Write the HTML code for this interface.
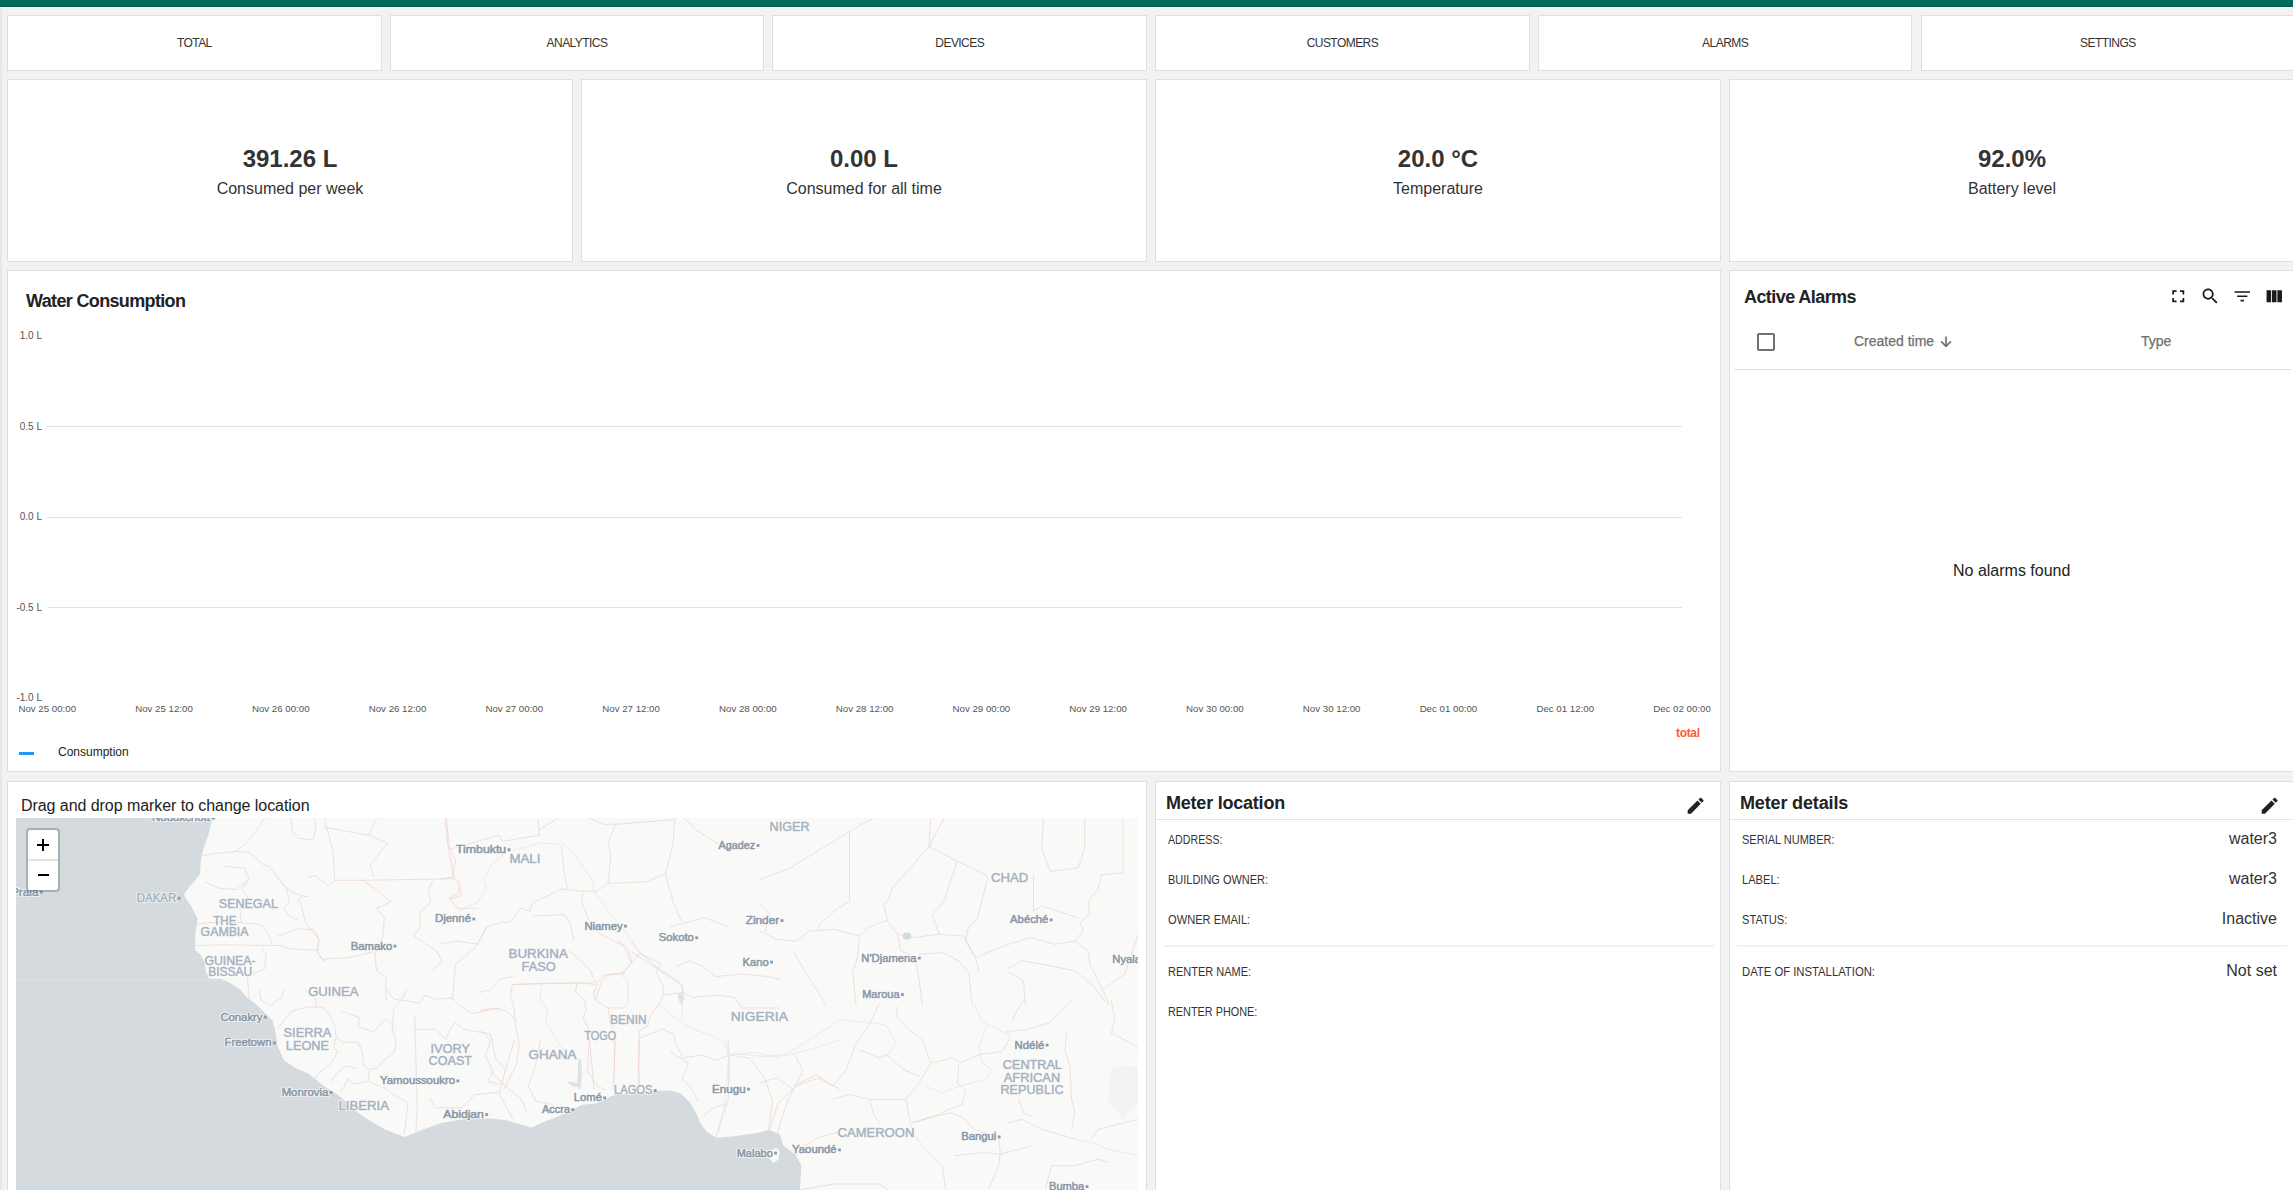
<!DOCTYPE html>
<html><head><meta charset="utf-8">
<style>
*{box-sizing:border-box;margin:0;padding:0}
html,body{width:2293px;height:1190px;overflow:hidden;background:#f2f2f2;font-family:"Liberation Sans",sans-serif;color:#333}
.abs{position:absolute}
#topbar{position:absolute;left:0;top:0;width:2293px;height:7px;background:#006a5c;border-bottom:1px solid #005a4e}
#topline{position:absolute;left:0;top:7px;width:2293px;height:1px;background:#fbf8f8}
#leftstrip{position:absolute;left:0;top:8px;width:2px;height:1182px;background:#e7e7e7}
.card{position:absolute;background:#fff;border:1px solid #dfdfdf}
.tab{top:15px;height:56px;display:flex;align-items:center;justify-content:center;font-size:12px;letter-spacing:-0.55px;color:#333}
.stat{top:79px;height:183px;width:566px}
.stat .v{position:absolute;left:0;right:0;top:64px;text-align:center;font-size:24px;font-weight:bold;line-height:30px;color:#333}
.stat .l{position:absolute;left:0;right:0;top:98.8px;text-align:center;font-size:16px;line-height:20px;color:#333}
.t{position:absolute;white-space:nowrap;line-height:1}
</style></head>
<body>
<div id="topbar"></div><div id="topline"></div><div id="leftstrip"></div>
<div class="card tab" style="left:7.0px;width:374.7px">TOTAL</div>
<div class="card tab" style="left:389.7px;width:374.7px">ANALYTICS</div>
<div class="card tab" style="left:772.4px;width:374.7px">DEVICES</div>
<div class="card tab" style="left:1155.1px;width:374.7px">CUSTOMERS</div>
<div class="card tab" style="left:1537.8px;width:374.7px">ALARMS</div>
<div class="card tab" style="left:1920.5px;width:374.7px">SETTINGS</div>
<div class="card stat" style="left:7px"><div class="v">391.26 L</div><div class="l">Consumed per week</div></div>
<div class="card stat" style="left:581px"><div class="v">0.00 L</div><div class="l">Consumed for all time</div></div>
<div class="card stat" style="left:1155px"><div class="v">20.0 °C</div><div class="l">Temperature</div></div>
<div class="card stat" style="left:1729px"><div class="v">92.0%</div><div class="l">Battery level</div></div>
<div class="card" style="left:7px;top:270px;width:1714px;height:502px"></div>
<div class="card" style="left:1729px;top:270px;width:566px;height:502px"></div>
<div class="card" style="left:7px;top:781px;width:1140px;height:420px"></div>
<div class="card" style="left:1155px;top:781px;width:566px;height:420px"></div>
<div class="card" style="left:1729px;top:781px;width:566px;height:420px"></div>
<div class="t" style="left:26px;top:291.76px;font-size:18px;color:#222;font-weight:bold;letter-spacing:-0.65px">Water Consumption</div>
<div class="t" style="left:0;width:42px;text-align:right;top:331.04px;font-size:10px;color:#555">1.0 L</div>
<div class="t" style="left:0;width:42px;text-align:right;top:421.54px;font-size:10px;color:#555">0.5 L</div>
<div class="t" style="left:0;width:42px;text-align:right;top:512.03px;font-size:10px;color:#555">0.0 L</div>
<div class="t" style="left:0;width:42px;text-align:right;top:602.53px;font-size:10px;color:#555">-0.5 L</div>
<div class="t" style="left:0;width:42px;text-align:right;top:693.03px;font-size:10px;color:#555">-1.0 L</div>
<div class="abs" style="left:47px;top:426px;width:1635px;height:1px;background:#e2e2e2"></div>
<div class="abs" style="left:47px;top:517px;width:1635px;height:1px;background:#e2e2e2"></div>
<div class="abs" style="left:47px;top:607px;width:1635px;height:1px;background:#e2e2e2"></div>
<div class="t" style="left:7.25px;width:80px;text-align:center;top:703.79px;font-size:9.7px;color:#555">Nov 25 00:00</div>
<div class="t" style="left:124.02px;width:80px;text-align:center;top:703.79px;font-size:9.7px;color:#555">Nov 25 12:00</div>
<div class="t" style="left:240.79px;width:80px;text-align:center;top:703.79px;font-size:9.7px;color:#555">Nov 26 00:00</div>
<div class="t" style="left:357.55px;width:80px;text-align:center;top:703.79px;font-size:9.7px;color:#555">Nov 26 12:00</div>
<div class="t" style="left:474.32px;width:80px;text-align:center;top:703.79px;font-size:9.7px;color:#555">Nov 27 00:00</div>
<div class="t" style="left:591.09px;width:80px;text-align:center;top:703.79px;font-size:9.7px;color:#555">Nov 27 12:00</div>
<div class="t" style="left:707.86px;width:80px;text-align:center;top:703.79px;font-size:9.7px;color:#555">Nov 28 00:00</div>
<div class="t" style="left:824.62px;width:80px;text-align:center;top:703.79px;font-size:9.7px;color:#555">Nov 28 12:00</div>
<div class="t" style="left:941.39px;width:80px;text-align:center;top:703.79px;font-size:9.7px;color:#555">Nov 29 00:00</div>
<div class="t" style="left:1058.16px;width:80px;text-align:center;top:703.79px;font-size:9.7px;color:#555">Nov 29 12:00</div>
<div class="t" style="left:1174.93px;width:80px;text-align:center;top:703.79px;font-size:9.7px;color:#555">Nov 30 00:00</div>
<div class="t" style="left:1291.70px;width:80px;text-align:center;top:703.79px;font-size:9.7px;color:#555">Nov 30 12:00</div>
<div class="t" style="left:1408.46px;width:80px;text-align:center;top:703.79px;font-size:9.7px;color:#555">Dec 01 00:00</div>
<div class="t" style="left:1525.23px;width:80px;text-align:center;top:703.79px;font-size:9.7px;color:#555">Dec 01 12:00</div>
<div class="t" style="left:1642.00px;width:80px;text-align:center;top:703.79px;font-size:9.7px;color:#555">Dec 02 00:00</div>
<div class="abs" style="left:19px;top:752px;width:15px;height:3px;background:#2196f3"></div>
<div class="t" style="left:58px;top:745.84px;font-size:12px;color:#222">Consumption</div>
<div class="t" style="left:1676px;top:727.34px;font-size:12px;color:#ff5b2e;font-weight:bold;letter-spacing:-0.34px">total</div>
<div class="t" style="left:1744px;top:287.76px;font-size:18px;color:#222;font-weight:bold;letter-spacing:-0.57px">Active Alarms</div>
<svg class="abs" style="left:2167.9px;top:285.8px" width="20.5" height="20.5" viewBox="0 0 24 24"><path fill="#1a1a1a" d="M7 14H5v5h5v-2H7v-3zm-2-4h2V7h3V5H5v5zm12 7h-3v2h5v-5h-2v3zM14 5v2h3v3h2V5h-5z"/></svg>
<svg class="abs" style="left:2199.8px;top:285.8px" width="20.5" height="20.5" viewBox="0 0 24 24"><path fill="#1a1a1a" d="M15.5 14h-.79l-.28-.27C15.410 12.59 16 11.11 16 9.5 16 5.91 13.09 3 9.5 3S3 5.91 3 9.5 5.91 16 9.5 16c1.61 0 3.09-.59 4.230-1.57l.27.28v.79l5 4.99L20.49 19l-4.99-5zm-6 0C7.01 14 5 11.99 5 9.5S7.01 5 9.5 5 14 7.01 14 9.5 11.99 14 9.5 14z"/></svg>
<svg class="abs" style="left:2231.6px;top:285.8px" width="20.5" height="20.5" viewBox="0 0 24 24"><path fill="#1a1a1a" d="M10 18h4v-2h-4v2zM3 6v2h18V6H3zm3 7h12v-2H6v2z"/></svg>
<svg class="abs" style="left:2263.9px;top:285.8px" width="20.5" height="20.5" viewBox="0 0 24 24"><path fill="#1a1a1a" d="M14.67 5v14H9.33V5h5.34zm1 14H21V5h-5.33v14zm-7.34 0V5H3v14h5.33z"/></svg>
<div class="abs" style="left:1757px;top:333px;width:18px;height:18px;border:2px solid #707070;border-radius:2px"></div>
<div class="t" style="left:1854px;top:334.15px;font-size:14px;color:#707070;-webkit-text-stroke:0.25px #707070">Created time</div>
<svg class="abs" style="left:1938.2px;top:334.2px" width="16" height="16" viewBox="0 0 24 24"><path fill="#6a6a6a" stroke="#6a6a6a" stroke-width="0.6" d="M20 12l-1.41-1.41L13 16.17V4h-2v12.17l-5.58-5.59L4 12l8 8 8-8z"/></svg>
<div class="t" style="left:2141px;top:334.15px;font-size:14px;color:#707070;-webkit-text-stroke:0.25px #707070">Type</div>
<div class="abs" style="left:1734px;top:369px;width:557px;height:1px;background:#e0e0e0"></div>
<div class="t" style="left:1953px;top:563.46px;font-size:16px;color:#222">No alarms found</div>
<div class="t" style="left:1166px;top:794.06px;font-size:18px;color:#222;font-weight:bold;letter-spacing:-0.22px">Meter location</div>
<svg class="abs" style="left:1685.2px;top:794.8px" width="21.3" height="21.3" viewBox="0 0 24 24"><path fill="#222" d="M3 17.25V21h3.75L17.81 9.94l-3.75-3.75L3 17.25zM20.71 7.04c.39-.39.39-1.02 0-1.41l-2.34-2.34c-.39-.39-1.02-.39-1.41 0l-1.83 1.83 3.75 3.75 1.83-1.83z"/></svg>
<div class="abs" style="left:1156px;top:819px;width:564px;height:1px;background:#e4e4e4"></div>
<div class="t" style="left:1168px;top:834.42px;font-size:12.5px;color:#333;transform:scaleX(0.8519);transform-origin:0 0">ADDRESS:</div>
<div class="t" style="left:1168px;top:874.42px;font-size:12.5px;color:#333;transform:scaleX(0.8783);transform-origin:0 0">BUILDING OWNER:</div>
<div class="t" style="left:1168px;top:914.42px;font-size:12.5px;color:#333;transform:scaleX(0.8897);transform-origin:0 0">OWNER EMAIL:</div>
<div class="t" style="left:1168px;top:966.42px;font-size:12.5px;color:#333;transform:scaleX(0.8806);transform-origin:0 0">RENTER NAME:</div>
<div class="t" style="left:1168px;top:1006.42px;font-size:12.5px;color:#333;transform:scaleX(0.8686);transform-origin:0 0">RENTER PHONE:</div>
<div class="abs" style="left:1163px;top:945px;width:551px;height:2px;background:#f1f1f1"></div>
<div class="t" style="left:1740px;top:794.46px;font-size:18px;color:#222;font-weight:bold;letter-spacing:-0.15px">Meter details</div>
<svg class="abs" style="left:2258.6px;top:795px" width="21.3" height="21.3" viewBox="0 0 24 24"><path fill="#222" d="M3 17.25V21h3.75L17.81 9.94l-3.75-3.75L3 17.25zM20.71 7.04c.39-.39.39-1.02 0-1.41l-2.34-2.34c-.39-.39-1.02-.39-1.41 0l-1.83 1.83 3.75 3.75 1.83-1.83z"/></svg>
<div class="abs" style="left:1730px;top:819px;width:563px;height:1px;background:#e4e4e4"></div>
<div class="t" style="left:1742px;top:834.42px;font-size:12.5px;color:#333;transform:scaleX(0.8805);transform-origin:0 0">SERIAL NUMBER:</div>
<div class="t" style="left:2077px;width:200px;text-align:right;top:831.46px;font-size:16px;color:#333">water3</div>
<div class="t" style="left:1742px;top:874.42px;font-size:12.5px;color:#333;transform:scaleX(0.8892);transform-origin:0 0">LABEL:</div>
<div class="t" style="left:2077px;width:200px;text-align:right;top:871.46px;font-size:16px;color:#333">water3</div>
<div class="t" style="left:1742px;top:914.42px;font-size:12.5px;color:#333;transform:scaleX(0.8913);transform-origin:0 0">STATUS:</div>
<div class="t" style="left:2077px;width:200px;text-align:right;top:911.46px;font-size:16px;color:#333">Inactive</div>
<div class="t" style="left:1742px;top:966.42px;font-size:12.5px;color:#333;transform:scaleX(0.9030);transform-origin:0 0">DATE OF INSTALLATION:</div>
<div class="t" style="left:2077px;width:200px;text-align:right;top:963.46px;font-size:16px;color:#333">Not set</div>
<div class="abs" style="left:1737px;top:945px;width:550px;height:2px;background:#f1f1f1"></div>
<div class="t" style="left:21px;top:798.06px;font-size:16px;color:#222;letter-spacing:-0.06px">Drag and drop marker to change location</div>
<svg class="abs" style="left:16px;top:818px" width="1122" height="372" viewBox="16 818 1122 372">
<rect x="16" y="818" width="1122" height="372" fill="#f9f9f8"/>
<g fill="none" stroke="#e3eaee" stroke-width="0.9"><path d="M541.5 984.5 L540.2 998.9 L548.0 1010.7 L545.4 1021.1 L553.3 1034.2 L561.1 1047.3 L571.6 1055.1"/><path d="M659.2 1004.1 L669.7 1013.3 L682.8 1023.7 L695.9 1030.3 L715.5 1036.8 L724.7 1044.7 L728.6 1055.1 L728.6 1089.9"/><path d="M731.2 1055.1 L754.8 1052.5 L779.6 1057.8"/><path d="M631.8 940.0 L639.6 951.8 L657.9 967.5 L681.5 983.2 L682.8 1000.2 L681.5 1018.5"/><path d="M760.0 1056.3 L784.9 1054.7 L809.7 1039.8 L839.5 1019.9 L859.4 1021.5 L886.0 1024.9 L895.9 1043.1 L886.0 1056.3"/><path d="M973.8 1003.3 L982.1 1021.5 L995.3 1028.2 L1008.6 1034.8"/><path d="M987.0 1024.9 L978.8 1046.4 L982.1 1063.0 L992.0 1069.6 L985.4 1079.5 L958.9 1086.2 L942.3 1092.8 L925.7 1086.2"/><path d="M1074.9 1139.2 L1091.5 1142.5 L1108.0 1149.2 L1139.5 1155.8"/><path d="M505.3 852.3 L541.1 843.0 L564.4 844.5 L572.2 850.8 L592.4 880.3 L593.9 891.2 L611.0 914.5 L626.6 933.2 L635.9 948.7 L657.7 968.9 L682.6 986.0"/><path d="M505.3 852.3 L491.3 864.8 L483.5 880.3 L486.6 889.6 L477.3 902.1 L458.7 911.4"/><path d="M725.1 1040.0 L729.7 1055.3 L734.2 1053.7 L764.8 1056.8 L787.7 1055.3 L810.6 1049.2 L839.6 1040.0"/><path d="M728.1 1062.9 L725.1 1101.1 L719.0 1131.6"/></g>
<g id="borders" fill="none" stroke="#eed5d8" stroke-width="0.8" stroke-linejoin="round"><path d="M202.4 855.7 L211.8 853.9 L235.1 851.5 L249.1 852.3 L258.4 860.1 L263.1 864.8 L269.3 866.3 L277.1 877.2 L284.9 886.5 L292.6 892.7 L302.0 895.9 L308.2 896.6"/><path d="M302.0 895.9 L298.8 899.0 L302.0 908.3 L305.1 920.7 L308.2 927.0 L314.4 930.1 L319.1 939.4 L316.7 950.3 L322.2 959.6 L325.3 961.2"/><path d="M308.2 877.2 L316.0 875.6 L328.4 886.5 L334.6 880.3 L362.6 880.3 L454.3 878.8 L448.1 846.1 L445.0 818.1"/><path d="M291.1 818.1 L292.6 832.1 L298.8 838.3 L312.8 839.9 L316.0 827.4 L314.4 818.1"/><path d="M325.3 818.1 L325.3 827.4 L368.8 835.2 L376.6 818.1"/><path d="M368.8 835.2 L387.5 843.0 L370.4 864.8 L373.5 877.2"/><path d="M326.8 827.4 L333.1 852.3 L334.6 878.8"/><path d="M264.6 818.1 L252.2 836.8 L241.3 847.7 L233.5 852.3"/><path d="M197.8 923.8 L213.3 922.3 L236.6 922.3 L255.3 923.8 L263.1 925.4 L270.9 939.4 L270.9 944.1"/><path d="M196.2 945.6 L221.1 944.8 L280.2 945.6 L281.7 947.2"/><path d="M280.2 945.6 L289.5 948.7 L316.0 950.3"/><path d="M261.5 948.7 L266.2 954.9 L264.6 968.9 L247.5 976.7 L249.1 1000.0"/><path d="M362.6 880.3 L376.6 889.6 L390.6 902.1 L376.6 908.3 L384.4 917.6 L382.8 936.3 L375.0 954.9 L376.6 970.5 L385.9 976.7 L385.9 1000.0"/><path d="M432.6 880.3 L427.9 892.7 L431.0 902.1 L420.1 911.4 L420.1 927.0 L413.9 936.3 L437.2 951.8 L441.9 961.2 L432.6 970.5"/><path d="M454.3 878.8 L460.6 886.5 L460.6 895.9 L449.7 899.0 L457.5 908.3 L479.2 908.3"/><path d="M277.1 936.3 L298.8 928.5 L311.3 930.1 L319.1 939.4 L317.5 951.8 L322.2 959.6 L333.1 958.1 L345.5 958.1 L362.6 954.9 L371.9 951.8 L376.6 954.9"/><path d="M224.2 866.3 L244.4 867.9 L249.1 878.8 L241.3 889.6 L249.1 899.0 L239.8 908.3 L241.3 922.3"/><path d="M205.5 881.9 L218.0 888.1 L236.6 889.6 L249.1 878.8"/><path d="M277.1 877.2 L286.4 888.1 L289.5 902.1 L283.3 908.3 L289.5 916.1 L298.8 920.7"/><path d="M277.2 1029.3 L291.6 1010.9 L307.3 1007.0 L323.0 1007.0 L329.5 1014.9 L334.8 1026.6 L336.1 1037.1 L333.5 1046.3"/><path d="M333.5 1046.3 L337.4 1052.8 L330.8 1063.3 L317.8 1073.7 L315.1 1079.0"/><path d="M336.1 1037.1 L342.6 1042.3 L358.3 1042.3 L362.2 1051.5 L363.5 1065.9 L370.1 1069.8 L377.9 1067.2 L383.2 1060.7 L393.6 1052.8 L396.3 1042.3 L392.3 1029.3 L393.6 1009.6 L402.8 997.9 L406.7 990.0"/><path d="M383.2 1086.8 L393.6 1094.7 L408.0 1102.5 L406.7 1115.6 L404.1 1133.9"/><path d="M368.8 1071.1 L368.8 1081.6 L380.6 1086.8"/><path d="M330.8 1081.6 L338.7 1071.1 L346.5 1065.9 L357.0 1068.5"/><path d="M341.3 1092.1 L347.8 1079.0 L354.4 1084.2 L367.5 1081.6"/><path d="M414.6 1014.9 L415.9 1058.0 L417.2 1107.8 L415.9 1131.3"/><path d="M448.6 1031.9 L455.1 1022.7 L464.3 1029.3 L485.2 1033.2 L490.5 1042.3 L485.2 1055.4 L493.1 1071.1 L487.8 1081.6 L499.6 1084.2"/><path d="M341.3 1010.9 L347.8 1013.6 L359.6 1017.5 L358.3 1026.6 L374.0 1031.9 L385.8 1018.8 L396.3 1029.3"/><path d="M387.1 990.0 L393.6 999.2 L404.1 1000.5 L419.8 1003.1 L425.0 995.2 L435.5 999.2 L452.5 997.9 L461.7 1007.0 L472.1 1013.6 L485.2 1010.9 L499.6 1008.3"/><path d="M414.6 1029.3 L435.5 1029.3 L446.0 1039.7 L448.6 1031.9"/><path d="M429.0 1097.3 L435.5 1107.8 L461.7 1107.8 L474.8 1094.7 L499.6 1092.1"/><path d="M258.9 990.0 L261.5 1000.5 L270.7 1005.7 L281.1 997.9 L283.7 990.0"/><path d="M304.7 990.0 L315.1 997.9 L316.4 1007.0"/><path d="M512.7 984.5 L545.4 983.2 L588.6 983.2 L597.8 981.9"/><path d="M597.8 981.9 L604.3 975.3 L621.3 974.0 L631.8 962.2 L627.8 947.9 L617.4 940.0"/><path d="M621.3 974.0 L627.8 981.9 L627.8 1002.8 L623.9 1008.0 L608.2 1008.0 L595.1 1000.2 L593.8 992.3 L597.8 983.2"/><path d="M631.8 962.2 L639.6 953.1 L660.6 963.6 L656.6 972.7 L663.2 985.8 L663.2 995.0 L659.2 1004.1 L650.1 1015.9 L647.5 1026.4 L639.6 1030.3 L638.3 1051.2 L639.6 1089.9"/><path d="M608.2 1008.0 L609.5 1022.4 L613.5 1030.3 L614.8 1051.2 L613.5 1089.9"/><path d="M576.8 983.2 L575.5 992.3 L584.7 1000.2 L586.0 1010.7 L583.4 1018.5 L588.6 1029.0 L589.9 1044.7 L592.5 1070.8 L593.8 1089.9"/><path d="M512.7 984.5 L510.1 995.0 L514.0 1008.0 L515.3 1025.0 L519.3 1044.7 L516.6 1064.3 L503.6 1089.9"/><path d="M480.0 1010.7 L493.1 1008.0 L506.2 1010.7 L516.6 1021.1"/><path d="M663.2 995.0 L684.1 992.3 L692.0 997.6 L715.5 995.0 L735.1 997.6 L741.7 1008.0 L779.6 1008.0"/><path d="M676.3 966.2 L689.3 960.9 L702.4 966.2 L715.5 976.6 L741.7 974.0 L767.8 976.6 L779.6 979.3"/><path d="M639.6 1038.1 L663.2 1029.0 L673.6 1034.2 L676.3 1044.7 L682.8 1057.8 L702.4 1055.1 L715.5 1060.4 L728.6 1055.1"/><path d="M480.0 992.3 L490.5 989.7 L499.6 979.3 L512.7 976.6"/><path d="M480.0 1031.6 L490.5 1034.2 L495.7 1057.8 L506.2 1070.8"/><path d="M872.7 818.3 L849.5 831.6 L789.8 868.0 L760.0 879.6"/><path d="M849.5 831.6 L849.5 901.2 L836.2 909.5 L819.7 924.4 L818.0 929.4"/><path d="M930.7 818.3 L929.0 846.5 L892.6 887.9 L887.6 901.2 L883.5 903.7 L887.6 921.1 L897.6 934.3 L900.9 950.9 L909.2 954.2 L915.8 960.8 L919.1 980.7 L922.4 1004.9"/><path d="M929.0 846.5 L957.2 861.4 L985.4 874.7 L988.7 879.6"/><path d="M944.0 818.3 L929.0 846.5"/><path d="M957.2 861.4 L944.0 901.2 L932.4 914.4 L939.0 934.3"/><path d="M987.0 881.3 L977.1 919.4 L968.8 926.0 L965.5 941.0 L975.4 957.5 L978.8 970.8"/><path d="M1043.4 818.3 L1041.7 848.1 L1050.0 871.3 L1078.2 868.0 L1084.8 848.1 L1084.8 818.3"/><path d="M1122.9 818.3 L1122.9 873.0 L1101.4 874.7 L1098.1 889.6 L1088.1 901.2 L1089.8 914.4 L1079.9 922.7 L1083.2 931.0 L1074.9 941.0 L1088.1 950.9 L1089.8 964.2 L1098.1 980.7 L1109.7 1004.9"/><path d="M1033.5 874.7 L1033.5 911.1 L1041.7 906.2 L1058.3 911.1 L1078.2 917.8"/><path d="M760.0 931.0 L776.6 939.3 L796.5 941.0 L809.7 931.0 L834.6 929.4 L859.4 936.0 L867.7 927.7 L884.3 921.1 L887.6 921.1"/><path d="M859.4 936.0 L857.8 955.9 L852.8 972.4 L856.1 1004.9"/><path d="M897.6 934.3 L912.5 937.6 L939.0 934.3 L963.8 936.0 L975.4 957.5"/><path d="M975.4 957.5 L1008.6 944.3 L1030.1 937.6 L1055.0 944.3 L1074.9 941.0"/><path d="M919.1 954.2 L942.3 952.6 L958.9 960.8 L968.8 972.4 L972.1 1004.9"/><path d="M1006.9 969.1 L1021.8 960.8 L1041.7 964.2 L1074.9 970.8 L1091.5 984.0 L1108.0 1004.9"/><path d="M1025.2 1004.9 L1023.5 980.7 L1008.6 972.4"/><path d="M1101.4 990.7 L1124.6 974.1 L1139.5 931.0"/><path d="M760.0 904.5 L769.9 914.4 L765.0 931.0"/><path d="M793.1 950.9 L809.7 979.1 L826.3 1004.9"/><path d="M879.3 1003.3 L869.4 1024.9 L856.1 1043.1 L846.2 1069.6 L832.9 1086.2 L816.3 1074.6 L799.8 1082.9 L778.2 1102.8 L769.9 1129.3"/><path d="M897.6 1006.6 L895.9 1016.6 L909.2 1029.8 L922.4 1039.8 L930.7 1063.0 L919.1 1082.9 L905.8 1099.4 L909.2 1116.0 L912.5 1132.6 L922.4 1145.8 L942.3 1165.7 L945.6 1189.9"/><path d="M930.7 1063.0 L952.2 1058.0 L960.5 1063.0 L978.8 1054.7 L1002.0 1051.4 L1010.2 1038.1 L1006.9 1031.5 L1025.2 1029.8 L1048.4 1023.2 L1071.6 1000.0"/><path d="M958.9 1064.6 L957.2 1082.9 L965.5 1089.5 L962.2 1104.4 L952.2 1107.7 L935.7 1116.0 L912.5 1122.6"/><path d="M998.6 1135.9 L1000.3 1152.5 L998.6 1165.7 L988.7 1189.9"/><path d="M912.5 1122.6 L935.7 1116.0 L952.2 1112.7 L965.5 1119.3 L973.8 1129.3 L995.3 1135.9"/><path d="M799.8 1189.9 L834.6 1184.0 L879.3 1184.0 L887.6 1189.9"/><path d="M953.9 1155.8 L983.7 1152.5 L1000.3 1154.1 L1031.8 1145.8"/><path d="M1011.9 1019.9 L1023.5 1000.0"/><path d="M1111.3 1000.0 L1114.7 1019.9 L1111.3 1033.1 L1131.2 1043.1 L1139.5 1049.7"/><path d="M1066.6 1033.1 L1064.9 1049.7 L1069.9 1066.3 L1071.6 1099.4 L1074.9 1112.7 L1071.6 1129.3"/><path d="M1018.5 1097.8 L1023.5 1112.7 L1031.8 1116.0"/><path d="M1045.1 1189.9 L1051.7 1165.7 L1074.9 1165.7 L1098.1 1159.1 L1108.0 1162.4"/><path d="M1139.5 1119.3 L1124.6 1122.6 L1098.1 1129.3 L1091.5 1139.2"/><path d="M760.0 1082.9 L776.6 1077.9 L793.1 1089.5"/><path d="M859.4 1049.7 L879.3 1058.0 L886.0 1054.7 L904.2 1069.6 L919.1 1076.2"/><path d="M832.9 1099.4 L849.5 1094.5 L869.4 1099.4 L905.8 1099.4"/><path d="M869.4 1099.4 L874.4 1116.0 L879.3 1122.6"/><path d="M1008.6 1122.6 L1021.8 1119.3 L1041.7 1129.3 L1074.9 1139.2"/><path d="M446.2 818.1 L449.3 847.7 L455.5 860.1 L452.4 877.2 L440.0 878.8"/><path d="M449.3 849.2 L499.1 835.2 L502.2 841.4 L539.5 835.2 L538.0 818.1"/><path d="M538.0 830.5 L558.2 818.1"/><path d="M589.3 818.1 L603.3 824.3 L615.7 824.3 L673.2 819.7"/><path d="M615.7 824.3 L607.9 843.0 L611.0 855.4 L607.9 883.4 L645.3 881.9 L657.7 877.2 L665.5 874.1 L673.2 843.0 L674.8 818.1"/><path d="M561.3 846.1 L564.4 874.1 L567.5 889.6 L583.1 891.2 L597.1 891.2 L607.9 883.4"/><path d="M440.0 944.1 L455.5 941.0 L477.3 944.1 L486.6 927.0 L502.2 922.3 L510.0 922.3 L520.9 908.3 L530.2 911.4 L531.7 903.6 L561.3 888.9 L567.5 889.6"/><path d="M583.1 891.2 L581.5 902.1 L589.3 920.7 L598.6 933.2 L623.5 945.6 L631.3 962.7 L623.5 973.6 L609.5 973.6 L601.7 981.4 L595.5 1000.0"/><path d="M631.3 951.8 L657.7 968.9 L682.6 986.0 L684.1 1000.0"/><path d="M670.1 927.0 L704.3 917.6 L729.2 927.0"/><path d="M665.5 874.1 L673.2 902.1 L681.0 920.7"/><path d="M684.1 818.1 L696.6 830.5 L729.2 850.8"/><path d="M513.1 984.5 L579.9 982.9 L595.5 984.5"/><path d="M533.3 916.1 L564.4 914.5 L570.6 923.8 L573.7 939.4"/><path d="M447.8 899.0 L458.7 892.7 L458.7 880.3"/><path d="M486.6 927.0 L475.8 947.2 L455.5 964.3 L452.4 1000.0"/><path d="M569.1 950.3 L589.3 968.9 L595.5 981.4"/><path d="M490.0 1070.5 L505.3 1085.8 L520.5 1098.0 L526.6 1111.7"/><path d="M514.4 1040.0 L505.3 1070.5 L499.2 1093.4 L512.9 1119.4"/><path d="M540.4 1040.0 L535.8 1064.4 L528.2 1085.8 L535.8 1101.1 L551.1 1104.1 L561.7 1113.3"/><path d="M589.2 1040.0 L587.7 1070.5 L596.9 1085.8 L606.0 1090.4"/><path d="M615.2 1040.0 L613.6 1082.7"/><path d="M639.6 1040.0 L638.1 1085.8"/><path d="M670.1 1052.2 L688.4 1062.9 L682.3 1078.2 L693.0 1090.4 L697.6 1101.1"/><path d="M728.1 1040.0 L729.7 1062.9 L728.1 1101.1 L719.0 1125.5 L715.9 1137.7"/><path d="M731.2 1055.3 L749.5 1058.3 L764.8 1078.2 L772.4 1101.1 L769.3 1125.5 L767.8 1131.6"/><path d="M795.3 1055.3 L802.9 1070.5 L787.7 1101.1 L780.0 1124.0 L777.0 1134.6"/><path d="M795.3 1085.8 L818.2 1078.2 L833.5 1085.8 L839.6 1088.8"/><path d="M839.6 1131.6 L818.2 1137.7 L802.9 1146.9 L795.3 1156.0"/><path d="M703.7 1116.3 L711.3 1108.7 L726.6 1104.1"/></g>
<path d="M1111 1068 L1124 1066 L1139 1067 L1139 1100 L1123 1119 L1108 1100 Z" fill="#f3f4f2"/>
<path d="M15.0 817.0 L212.5 818.0 L208.3 835.2 L203.3 848.7 L200.8 860.4 L200.0 873.9 L195.3 880.0 L189.4 887.0 L184.1 894.1 L185.9 898.8 L190.6 904.7 L194.1 911.8 L197.6 918.8 L196.5 927.0 L195.3 933.0 L195.3 944.7 L195.3 950.6 L200.0 954.1 L204.7 962.4 L205.9 971.8 L209.4 978.8 L221.2 978.8 L230.6 983.5 L240.0 989.4 L247.0 997.6 L256.5 1004.7 L265.9 1014.1 L272.3 1020.3 L275.6 1032.0 L277.3 1045.5 L284.0 1060.6 L294.1 1067.3 L309.2 1074.0 L321.0 1084.1 L339.5 1095.9 L358.0 1112.7 L368.0 1119.4 L384.9 1129.5 L405.0 1137.0 L418.5 1131.2 L442.0 1122.8 L462.2 1119.4 L490.0 1118.6 L505.3 1120.1 L526.6 1126.2 L531.2 1127.8 L540.4 1123.2 L554.1 1117.9 L569.4 1111.7 L581.6 1104.9 L596.9 1103.3 L612.1 1095.7 L627.4 1093.4 L654.9 1091.1 L670.1 1090.4 L680.8 1093.4 L690.0 1102.6 L696.1 1113.3 L700.7 1124.0 L706.8 1131.6 L715.9 1137.7 L734.2 1136.2 L757.1 1133.1 L769.3 1130.1 L780.0 1134.6 L783.1 1145.3 L795.3 1154.5 L801.4 1165.2 L799.9 1191.0 L15.0 1191.0 Z" fill="#d4dadd"/>
<ellipse cx="907" cy="936" rx="4.2" ry="3.8" fill="#d4dadd"/><path d="M579 1058 L581 1060 L582 1072 L581 1086 L580 1091 L578 1087 L572 1086 L566 1081 L571 1082 L577 1083 L578 1072 L578 1064 Z" fill="#dde2e5"/><path d="M678 994 L681 993 L683 1000 L681 1005 L679 1001 Z" fill="#dde2e5"/>
<path d="M771 1150 L777 1148 L780 1152 L778 1160 L773 1163 L769 1158 Z" fill="#f9f9f8"/>
<rect x="16" y="980" width="208" height="1" fill="#dde2e4"/>
<g font-family="Liberation Sans" fill="none" stroke="#fff" stroke-width="2.2" stroke-linejoin="round" opacity="0.85"><text x="218.8" y="907.9" font-size="12.5" textLength="59.1" lengthAdjust="spacingAndGlyphs">SENEGAL</text><text x="213.3" y="924.5" font-size="12.5" textLength="23.0" lengthAdjust="spacingAndGlyphs">THE</text><text x="200.6" y="936.3" font-size="12.5" textLength="47.9" lengthAdjust="spacingAndGlyphs">GAMBIA</text><text x="204.4" y="964.5" font-size="12.5" textLength="51.1" lengthAdjust="spacingAndGlyphs">GUINEA-</text><text x="208.2" y="975.5" font-size="12.5" textLength="44.1" lengthAdjust="spacingAndGlyphs">BISSAU</text><text x="308.2" y="995.7" font-size="12.5" textLength="50.2" lengthAdjust="spacingAndGlyphs">GUINEA</text><text x="283.6" y="1037.2" font-size="12.5" textLength="47.6" lengthAdjust="spacingAndGlyphs">SIERRA</text><text x="285.8" y="1049.7" font-size="12.5" textLength="43.2" lengthAdjust="spacingAndGlyphs">LEONE</text><text x="338.5" y="1109.7" font-size="12.5" textLength="50.5" lengthAdjust="spacingAndGlyphs">LIBERIA</text><text x="509.4" y="863.2" font-size="12.5" textLength="31.0" lengthAdjust="spacingAndGlyphs">MALI</text><text x="508.5" y="958.0" font-size="12.5" textLength="59.4" lengthAdjust="spacingAndGlyphs">BURKINA</text><text x="521.6" y="970.8" font-size="12.5" textLength="34.1" lengthAdjust="spacingAndGlyphs">FASO</text><text x="430.5" y="1052.9" font-size="12.5" textLength="39.6" lengthAdjust="spacingAndGlyphs">IVORY</text><text x="428.6" y="1065.0" font-size="12.5" textLength="43.4" lengthAdjust="spacingAndGlyphs">COAST</text><text x="528.6" y="1058.5" font-size="12.5" textLength="47.9" lengthAdjust="spacingAndGlyphs">GHANA</text><text x="769.6" y="831.2" font-size="12.5" textLength="39.9" lengthAdjust="spacingAndGlyphs">NIGER</text><text x="991" y="882.3" font-size="12.5" textLength="37.3" lengthAdjust="spacingAndGlyphs">CHAD</text><text x="610" y="1023.5" font-size="12.5" textLength="36.7" lengthAdjust="spacingAndGlyphs">BENIN</text><text x="730.8" y="1021.2" font-size="12.5" textLength="57.1" lengthAdjust="spacingAndGlyphs">NIGERIA</text><text x="584.4" y="1040.1" font-size="12.5" textLength="31.9" lengthAdjust="spacingAndGlyphs">TOGO</text><text x="1002.8" y="1068.8" font-size="12.5" textLength="59.1" lengthAdjust="spacingAndGlyphs">CENTRAL</text><text x="1003.7" y="1081.6" font-size="12.5" textLength="56.6" lengthAdjust="spacingAndGlyphs">AFRICAN</text><text x="1000.5" y="1094.4" font-size="12.5" textLength="63.0" lengthAdjust="spacingAndGlyphs">REPUBLIC</text><text x="837.6" y="1136.9" font-size="12.5" textLength="76.7" lengthAdjust="spacingAndGlyphs">CAMEROON</text><text x="136.7" y="902.1" font-size="12" textLength="39.6" lengthAdjust="spacingAndGlyphs">DAKAR</text><text x="614" y="1094.4" font-size="12" textLength="38.4" lengthAdjust="spacingAndGlyphs">LAGOS</text><text x="152" y="820.5" font-size="10.5" textLength="58.0" lengthAdjust="spacingAndGlyphs">Nouakchott</text><text x="11" y="895.5" font-size="10.5" textLength="27.5" lengthAdjust="spacingAndGlyphs">Praia</text><text x="220.4" y="1020.5" font-size="10.5" textLength="42.1" lengthAdjust="spacingAndGlyphs">Conakry</text><text x="224.5" y="1046.3" font-size="10.5" textLength="47.0" lengthAdjust="spacingAndGlyphs">Freetown</text><text x="281.7" y="1095.8" font-size="10.5" textLength="46.6" lengthAdjust="spacingAndGlyphs">Monrovia</text><text x="456" y="853.1" font-size="10.5" textLength="50.2" lengthAdjust="spacingAndGlyphs">Timbuktu</text><text x="435" y="922.4" font-size="10.5" textLength="36.0" lengthAdjust="spacingAndGlyphs">Djenné</text><text x="350.7" y="949.5" font-size="10.5" textLength="41.5" lengthAdjust="spacingAndGlyphs">Bamako</text><text x="380" y="1084.3" font-size="10.5" textLength="75.1" lengthAdjust="spacingAndGlyphs">Yamoussoukro</text><text x="443.3" y="1118" font-size="10.5" textLength="40.6" lengthAdjust="spacingAndGlyphs">Abidjan</text><text x="542" y="1113" font-size="10.5" textLength="28.0" lengthAdjust="spacingAndGlyphs">Accra</text><text x="718.5" y="848.9" font-size="10.5" textLength="36.7" lengthAdjust="spacingAndGlyphs">Agadez</text><text x="584.4" y="929.5" font-size="10.5" textLength="38.3" lengthAdjust="spacingAndGlyphs">Niamey</text><text x="658.8" y="941.2" font-size="10.5" textLength="35.1" lengthAdjust="spacingAndGlyphs">Sokoto</text><text x="745.7" y="924" font-size="10.5" textLength="33.5" lengthAdjust="spacingAndGlyphs">Zinder</text><text x="1010.1" y="923.3" font-size="10.5" textLength="38.3" lengthAdjust="spacingAndGlyphs">Abéché</text><text x="742.5" y="965.5" font-size="10.5" textLength="26.2" lengthAdjust="spacingAndGlyphs">Kano</text><text x="861.3" y="961.5" font-size="10.5" textLength="55.2" lengthAdjust="spacingAndGlyphs">N'Djamena</text><text x="1112.3" y="963" font-size="10.5" textLength="28.7" lengthAdjust="spacingAndGlyphs">Nyala</text><text x="862.2" y="998" font-size="10.5" textLength="37.4" lengthAdjust="spacingAndGlyphs">Maroua</text><text x="1014.6" y="1048.5" font-size="10.5" textLength="29.7" lengthAdjust="spacingAndGlyphs">Ndélé</text><text x="573.8" y="1101.2" font-size="10.5" textLength="28.1" lengthAdjust="spacingAndGlyphs">Lomé</text><text x="712.1" y="1092.5" font-size="10.5" textLength="33.6" lengthAdjust="spacingAndGlyphs">Enugu</text><text x="961.2" y="1140.3" font-size="10.5" textLength="35.2" lengthAdjust="spacingAndGlyphs">Bangui</text><text x="736.7" y="1156.5" font-size="10.5" textLength="36.1" lengthAdjust="spacingAndGlyphs">Malabo</text><text x="792" y="1153.3" font-size="10.5" textLength="44.7" lengthAdjust="spacingAndGlyphs">Yaoundé</text><text x="1049" y="1190" font-size="10.5" textLength="35.2" lengthAdjust="spacingAndGlyphs">Bumba</text></g>
<g font-family="Liberation Sans" fill="#a6b2be" stroke="#a6b2be" stroke-width="0.5"><text x="218.8" y="907.9" font-size="12.5" textLength="59.1" lengthAdjust="spacingAndGlyphs">SENEGAL</text><text x="213.3" y="924.5" font-size="12.5" textLength="23.0" lengthAdjust="spacingAndGlyphs">THE</text><text x="200.6" y="936.3" font-size="12.5" textLength="47.9" lengthAdjust="spacingAndGlyphs">GAMBIA</text><text x="204.4" y="964.5" font-size="12.5" textLength="51.1" lengthAdjust="spacingAndGlyphs">GUINEA-</text><text x="208.2" y="975.5" font-size="12.5" textLength="44.1" lengthAdjust="spacingAndGlyphs">BISSAU</text><text x="308.2" y="995.7" font-size="12.5" textLength="50.2" lengthAdjust="spacingAndGlyphs">GUINEA</text><text x="283.6" y="1037.2" font-size="12.5" textLength="47.6" lengthAdjust="spacingAndGlyphs">SIERRA</text><text x="285.8" y="1049.7" font-size="12.5" textLength="43.2" lengthAdjust="spacingAndGlyphs">LEONE</text><text x="338.5" y="1109.7" font-size="12.5" textLength="50.5" lengthAdjust="spacingAndGlyphs">LIBERIA</text><text x="509.4" y="863.2" font-size="12.5" textLength="31.0" lengthAdjust="spacingAndGlyphs">MALI</text><text x="508.5" y="958.0" font-size="12.5" textLength="59.4" lengthAdjust="spacingAndGlyphs">BURKINA</text><text x="521.6" y="970.8" font-size="12.5" textLength="34.1" lengthAdjust="spacingAndGlyphs">FASO</text><text x="430.5" y="1052.9" font-size="12.5" textLength="39.6" lengthAdjust="spacingAndGlyphs">IVORY</text><text x="428.6" y="1065.0" font-size="12.5" textLength="43.4" lengthAdjust="spacingAndGlyphs">COAST</text><text x="528.6" y="1058.5" font-size="12.5" textLength="47.9" lengthAdjust="spacingAndGlyphs">GHANA</text><text x="769.6" y="831.2" font-size="12.5" textLength="39.9" lengthAdjust="spacingAndGlyphs">NIGER</text><text x="991" y="882.3" font-size="12.5" textLength="37.3" lengthAdjust="spacingAndGlyphs">CHAD</text><text x="610" y="1023.5" font-size="12.5" textLength="36.7" lengthAdjust="spacingAndGlyphs">BENIN</text><text x="730.8" y="1021.2" font-size="12.5" textLength="57.1" lengthAdjust="spacingAndGlyphs">NIGERIA</text><text x="584.4" y="1040.1" font-size="12.5" textLength="31.9" lengthAdjust="spacingAndGlyphs">TOGO</text><text x="1002.8" y="1068.8" font-size="12.5" textLength="59.1" lengthAdjust="spacingAndGlyphs">CENTRAL</text><text x="1003.7" y="1081.6" font-size="12.5" textLength="56.6" lengthAdjust="spacingAndGlyphs">AFRICAN</text><text x="1000.5" y="1094.4" font-size="12.5" textLength="63.0" lengthAdjust="spacingAndGlyphs">REPUBLIC</text><text x="837.6" y="1136.9" font-size="12.5" textLength="76.7" lengthAdjust="spacingAndGlyphs">CAMEROON</text><text x="136.7" y="902.1" font-size="12" textLength="39.6" lengthAdjust="spacingAndGlyphs">DAKAR</text><text x="614" y="1094.4" font-size="12" textLength="38.4" lengthAdjust="spacingAndGlyphs">LAGOS</text></g>
<g font-family="Liberation Sans" fill="#8c99a7" stroke="#8c99a7" stroke-width="0.55"><text x="152" y="820.5" font-size="10.5" textLength="58.0" lengthAdjust="spacingAndGlyphs">Nouakchott</text><text x="11" y="895.5" font-size="10.5" textLength="27.5" lengthAdjust="spacingAndGlyphs">Praia</text><text x="220.4" y="1020.5" font-size="10.5" textLength="42.1" lengthAdjust="spacingAndGlyphs">Conakry</text><text x="224.5" y="1046.3" font-size="10.5" textLength="47.0" lengthAdjust="spacingAndGlyphs">Freetown</text><text x="281.7" y="1095.8" font-size="10.5" textLength="46.6" lengthAdjust="spacingAndGlyphs">Monrovia</text><text x="456" y="853.1" font-size="10.5" textLength="50.2" lengthAdjust="spacingAndGlyphs">Timbuktu</text><text x="435" y="922.4" font-size="10.5" textLength="36.0" lengthAdjust="spacingAndGlyphs">Djenné</text><text x="350.7" y="949.5" font-size="10.5" textLength="41.5" lengthAdjust="spacingAndGlyphs">Bamako</text><text x="380" y="1084.3" font-size="10.5" textLength="75.1" lengthAdjust="spacingAndGlyphs">Yamoussoukro</text><text x="443.3" y="1118" font-size="10.5" textLength="40.6" lengthAdjust="spacingAndGlyphs">Abidjan</text><text x="542" y="1113" font-size="10.5" textLength="28.0" lengthAdjust="spacingAndGlyphs">Accra</text><text x="718.5" y="848.9" font-size="10.5" textLength="36.7" lengthAdjust="spacingAndGlyphs">Agadez</text><text x="584.4" y="929.5" font-size="10.5" textLength="38.3" lengthAdjust="spacingAndGlyphs">Niamey</text><text x="658.8" y="941.2" font-size="10.5" textLength="35.1" lengthAdjust="spacingAndGlyphs">Sokoto</text><text x="745.7" y="924" font-size="10.5" textLength="33.5" lengthAdjust="spacingAndGlyphs">Zinder</text><text x="1010.1" y="923.3" font-size="10.5" textLength="38.3" lengthAdjust="spacingAndGlyphs">Abéché</text><text x="742.5" y="965.5" font-size="10.5" textLength="26.2" lengthAdjust="spacingAndGlyphs">Kano</text><text x="861.3" y="961.5" font-size="10.5" textLength="55.2" lengthAdjust="spacingAndGlyphs">N'Djamena</text><text x="1112.3" y="963" font-size="10.5" textLength="28.7" lengthAdjust="spacingAndGlyphs">Nyala</text><text x="862.2" y="998" font-size="10.5" textLength="37.4" lengthAdjust="spacingAndGlyphs">Maroua</text><text x="1014.6" y="1048.5" font-size="10.5" textLength="29.7" lengthAdjust="spacingAndGlyphs">Ndélé</text><text x="573.8" y="1101.2" font-size="10.5" textLength="28.1" lengthAdjust="spacingAndGlyphs">Lomé</text><text x="712.1" y="1092.5" font-size="10.5" textLength="33.6" lengthAdjust="spacingAndGlyphs">Enugu</text><text x="961.2" y="1140.3" font-size="10.5" textLength="35.2" lengthAdjust="spacingAndGlyphs">Bangui</text><text x="736.7" y="1156.5" font-size="10.5" textLength="36.1" lengthAdjust="spacingAndGlyphs">Malabo</text><text x="792" y="1153.3" font-size="10.5" textLength="44.7" lengthAdjust="spacingAndGlyphs">Yaoundé</text><text x="1049" y="1190" font-size="10.5" textLength="35.2" lengthAdjust="spacingAndGlyphs">Bumba</text></g>
<g fill="#8c99a7">
<rect x="212.0" y="816.5" width="3" height="3"/>
<rect x="39.9" y="890.7" width="2.8" height="2.8"/>
<rect x="263.9" y="1015.7" width="2.8" height="2.8"/>
<rect x="272.9" y="1041.5" width="2.8" height="2.8"/>
<rect x="329.7" y="1091.0" width="2.8" height="2.8"/>
<rect x="507.6" y="848.3" width="2.8" height="2.8"/>
<rect x="472.4" y="917.6" width="2.8" height="2.8"/>
<rect x="393.6" y="944.7" width="2.8" height="2.8"/>
<rect x="456.5" y="1079.5" width="2.8" height="2.8"/>
<rect x="485.3" y="1113.2" width="2.8" height="2.8"/>
<rect x="571.4" y="1108.2" width="2.8" height="2.8"/>
<rect x="756.6" y="844.1" width="2.8" height="2.8"/>
<rect x="624.1" y="924.7" width="2.8" height="2.8"/>
<rect x="695.3" y="936.4" width="2.8" height="2.8"/>
<rect x="780.6" y="919.2" width="2.8" height="2.8"/>
<rect x="1049.8" y="918.5" width="2.8" height="2.8"/>
<rect x="770.1" y="960.7" width="2.8" height="2.8"/>
<rect x="917.9" y="956.7" width="2.8" height="2.8"/>
<rect x="1142.4" y="958.2" width="2.8" height="2.8"/>
<rect x="901.0" y="993.2" width="2.8" height="2.8"/>
<rect x="1045.7" y="1043.7" width="2.8" height="2.8"/>
<rect x="603.3" y="1096.4" width="2.8" height="2.8"/>
<rect x="747.1" y="1087.7" width="2.8" height="2.8"/>
<rect x="997.8" y="1135.5" width="2.8" height="2.8"/>
<rect x="774.2" y="1151.7" width="2.8" height="2.8"/>
<rect x="838.1" y="1148.5" width="2.8" height="2.8"/>
<rect x="1085.6" y="1185.2" width="2.8" height="2.8"/>
<rect x="177.7" y="896.8" width="2.8" height="2.8"/>
<rect x="653.8" y="1089.1" width="2.8" height="2.8"/>
</g>
</svg>
<div class="abs" style="left:26px;top:828px;width:34px;height:64px;background:#fff;border:2px solid rgba(0,0,0,0.2);border-radius:4px;background-clip:padding-box"></div>
<div class="abs" style="left:28px;top:859px;width:30px;height:2px;background:#e2e4e2"></div>
<div class="abs" style="left:37px;top:844px;width:11.5px;height:2.2px;background:#000"></div><div class="abs" style="left:41.6px;top:839px;width:2.2px;height:12px;background:#000"></div>
<div class="abs" style="left:38px;top:874px;width:11px;height:2.4px;background:#000"></div>
</body></html>
